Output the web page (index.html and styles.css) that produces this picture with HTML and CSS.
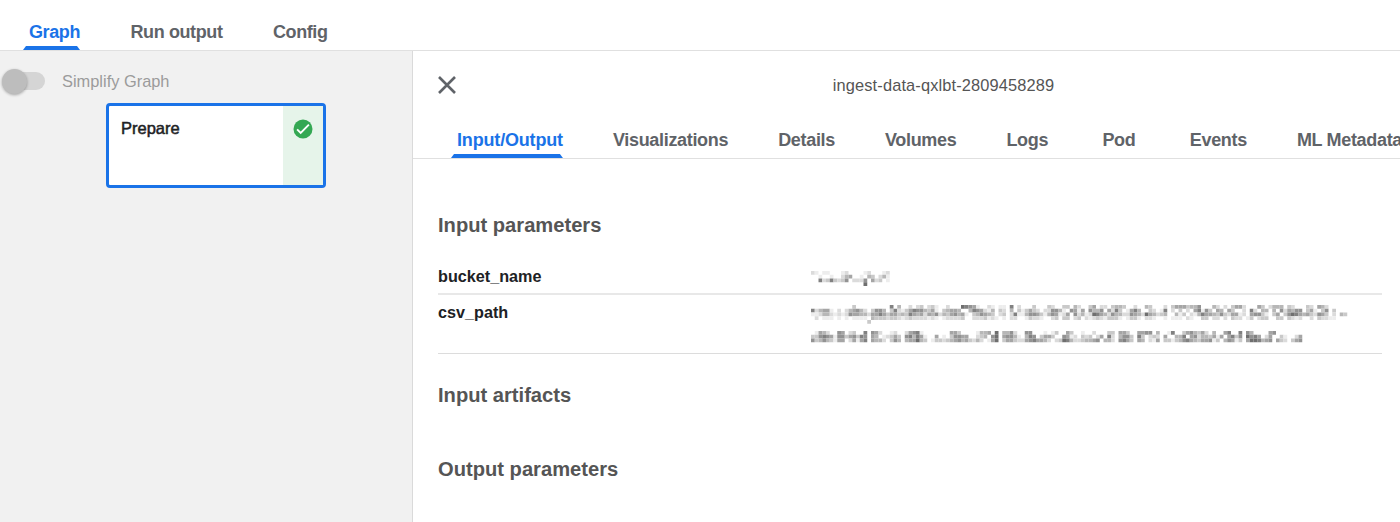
FILE: index.html
```html
<!DOCTYPE html>
<html lang="en">
<head>
<meta charset="utf-8">
<title>Run details</title>
<link rel="stylesheet" href="styles.css">
</head>
<body>
<nav class="main-tabs">
  <span class="tab active">Graph</span>
  <span class="tab">Run output</span>
  <span class="tab">Config</span>
</nav>
<div class="workspace">
  <section class="graph">
    <div class="simplify"><span class="switch"><span class="knob"></span></span><span>Simplify Graph</span></div>
    <div class="node">
      <span class="node-name">Prepare</span>
      <span class="node-status">
        <svg width="20" height="20" viewBox="0 0 20 20"><circle cx="10" cy="10" r="9.5" fill="#34a853"/><path d="M4.1 10.3l3.6 3.6 8.2-8.2" fill="none" stroke="#fff" stroke-width="1.9"/></svg>
      </span>
    </div>
  </section>
  <main class="panel">
    <header class="panel-head">
      <svg class="close" width="18" height="18" viewBox="0 0 18 18"><path d="M1 1l16 16M17 1L1 17" stroke="#5f6368" stroke-width="2.6"/></svg>
      <span class="title">ingest-data-qxlbt-2809458289</span>
    </header>
    <nav class="panel-tabs">
      <span class="tab active io">Input/Output</span>
      <span class="tab">Visualizations</span>
      <span class="tab">Details</span>
      <span class="tab">Volumes</span>
      <span class="tab short">Logs</span>
      <span class="tab short">Pod</span>
      <span class="tab">Events</span>
      <span class="tab">ML Metadata</span>
    </nav>
    <div class="content">
      <h2>Input parameters</h2>
      <div class="param">
        <span class="name">bucket_name</span>
        <svg class="masked" data-mask="bucket" width="560" height="20"></svg>
      </div>
      <div class="param tall">
        <span class="name">csv_path</span>
        <svg class="masked" data-mask="path" width="560" height="44"></svg>
      </div>
      <h2 class="artifacts">Input artifacts</h2>
      <h2 class="outputs">Output parameters</h2>
    </div>
  </main>
</div>
<script src="mask.js"></script>
</body>
</html>
```
FILE: mask.js
```js
// Mosaic tiles for masked values: each digit is a tile's darkness.
const CELL = 3.75;
const masks = {
  bucket: [{ y: 2, rows: [
    "210110001200001200012",
    "001001002450010430241",
    "007237323602226052301",
    "000000000000008000000"
  ]}],
  path: [{ y: 0, rows: [
    "00000000000300000000070" + "4002023023100200087651002101107020003000" + "3200330420035022034430020043000203555344" + "60004202035520005302444032000320542000000",
    "72455102024564203664037" + "2135766435103455400476521403204031353202" + "2664106515064460527301574003201702030205" + "71630540530020720440406254660351036030000",
    "11244212126554425575355" + "3437545254624356451034654302302711466531" + "4651250624128754264422654285423400413021" + "47554363255120566310350368754532653020430",
    "02011101010111104333233" + "2123222212101222230022231210102200132210" + "0230330230212321333101331022100101110210" + "03302202032201302330033032120020322110000",
    "00000000000000030000000"
  ]}, { y: 26, rows: [
    "01542006502300706520012" + "0025671000000055300001445080446200660001" + "0130053001002000330553005566040017003564" + "3520400570070640000560000000",
    "33676516635637605401235" + "3067475100501036655002340680566410476035" + "5300651203230250720466307302320500447056" + "2443515057360867502500310025",
    "63464315502515705442036" + "4045584301332345645324201580355322567554" + "2023874223445604420675305402150331346754" + "3556130465130588745605320356"
  ]}]
};
document.querySelectorAll(".masked").forEach((svg) => {
  masks[svg.dataset.mask].forEach(({ y, rows }) => {
    rows.forEach((row, r) => [...row].forEach((level, c) => {
      if (level === "0") return;
      const tile = document.createElementNS("http://www.w3.org/2000/svg", "rect");
      const shade = 255 - Number(level) * 18;
      tile.setAttribute("x", c * CELL);
      tile.setAttribute("y", y + r * CELL);
      tile.setAttribute("width", CELL);
      tile.setAttribute("height", CELL);
      tile.setAttribute("fill", `rgb(${shade},${shade},${shade})`);
      svg.append(tile);
    }));
  });
});
```
FILE: styles.css
```css
* { box-sizing: border-box; }
body {
  margin: 0;
  height: 522px;
  display: flex;
  flex-direction: column;
  overflow: hidden;
  background: #fff;
  font-family: "Liberation Sans", Arial, sans-serif;
  color: #202124;
}
.main-tabs {
  display: flex;
  flex: none;
  height: 51px;
  padding-left: 23px;
  gap: 44.5px;
  border-bottom: 1px solid #e0e0e0;
}
.tab {
  display: flex;
  flex-direction: column;
  flex: none;
  justify-content: flex-end;
  padding-left: 6px;
  font-size: 18px;
  letter-spacing: -.32px;
  line-height: 20px;
  font-weight: bold;
  color: #5f6368;
  white-space: nowrap;
}
.main-tabs .tab { letter-spacing: -.4px; }
.tab::after { content: ""; height: 4px; margin: 4px 0 0 -6px; }
.tab.active { color: #1a73e8; }
.tab.io { letter-spacing: -.17px; }
.tab.short { padding-right: 4.3px; }
.tab.active::after {
  background: #1a73e8;
  clip-path: polygon(3px 0, calc(100% - 3px) 0, 100% 100%, 0 100%);
}
.workspace { flex: 1; display: flex; min-height: 0; }
.graph { flex: none; width: 412px; background: #f1f1f1; padding-top: 16px; }
.simplify {
  display: flex;
  align-items: center;
  height: 28px;
  padding-left: 4px;
  gap: 17px;
  font-size: 16.4px;
  color: #9b9b9b;
}
.switch {
  display: flex;
  align-items: center;
  width: 41px;
  height: 18px;
  border-radius: 9px;
  background: #d5d5d5;
}
.knob {
  flex: none;
  width: 25px;
  height: 25px;
  margin-left: -2px;
  border-radius: 50%;
  background: #bdbdbd;
  box-shadow: 0 1px 3px rgba(0, 0, 0, .32);
}
.node {
  display: flex;
  width: 220px;
  height: 85px;
  margin: 8px 0 0 106px;
  border: 3px solid #1a73e8;
  border-radius: 4px;
  background: #fff;
}
.node-name {
  flex: 1;
  padding: 12px 0 0 12px;
  font-size: 16.5px;
  line-height: 20px;
  color: #202124;
  -webkit-text-stroke: .5px #202124;
}
.node-status { width: 40px; background: #e6f4ea; padding: 13px 0 0 10px; }
.node-status svg { display: block; }
.panel {
  flex: 1;
  min-width: 0;
  border-left: 1px solid #dadada;
  overflow: hidden;
}
.panel-head {
  display: grid;
  grid-template-columns: 18px 1fr;
  align-items: center;
  height: 68px;
  padding-left: 25px;
}
.title {
  justify-self: center;
  padding: 0 0 0 31px;
  font-size: 16.4px;
  letter-spacing: .13px;
  color: #555;
}
.panel-tabs {
  display: flex;
  height: 40px;
  padding-left: 38px;
  gap: 44px;
  border-bottom: 1px solid #e0e0e0;
}
.content { padding: 53px 18px 0 25px; }
h2 { margin: 0; font-size: 20.15px; line-height: 26px; color: #555; }
.param {
  display: grid;
  grid-template-columns: 373px 1fr;
  height: 36px;
  border-bottom: 2px solid #e8e8e8;
}
h2 + .param { margin-top: 21px; }
.param.tall { height: 59px; border-bottom: 1px solid #dcdcdc; }
.name { padding-top: 7px; font-size: 16.2px; line-height: 20px; font-weight: bold; }
.masked { margin-top: 10px; }
.artifacts { margin-top: 28px; }
.outputs { margin-top: 48px; }
```
